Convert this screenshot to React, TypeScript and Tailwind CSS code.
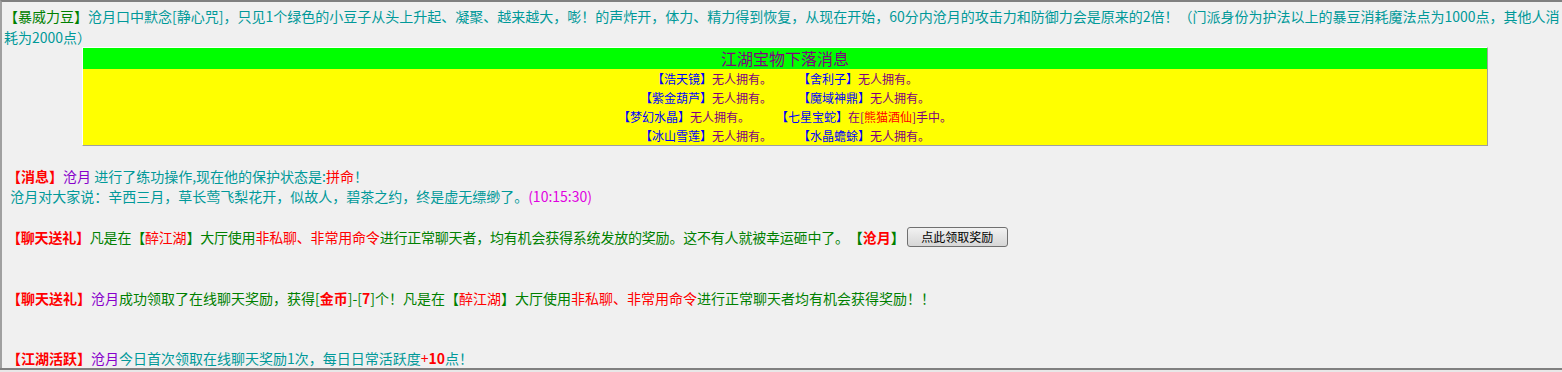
import React from 'react';

const font = "font-['Noto_Sans_CJK_SC',sans-serif]";

const treasures: [string, React.ReactNode, string, React.ReactNode][] = [
  ['浩天镜', '无人拥有。', '舍利子', '无人拥有。'],
  ['紫金葫芦', '无人拥有。', '魔域神鼎', '无人拥有。'],
  [
    '梦幻水晶',
    '无人拥有。',
    '七星宝蛇',
    <>
      在[<span className="text-[#ff0000]">熊猫酒仙</span>]手中。
    </>,
  ],
  ['冰山雪莲', '无人拥有。', '水晶蟾蜍', '无人拥有。'],
];

const Name = () => <span className="text-[#8800cc]">沧月</span>;

const App: React.FC = () => {
  return (
    <div lang="zh-CN" className={`h-[372px] w-[1562px] overflow-hidden bg-[#f0f0f0] ${font} text-[14px] leading-[20px]`}>
      <div className="h-[368px] overflow-hidden border-t-2 border-l-2 border-t-[#808080] border-l-[#a0a0a0] pt-[4px]">
        <div className="pl-[2px] leading-[21px] text-[#009999]">
          <span className="whitespace-nowrap">
            <span className="text-[#008000]">【暴威力豆】</span>沧月口中默念[静心咒]，只见1个绿色的小豆子从头上升起、凝聚、越来越大，嘭！的声炸开，体力、精力得到恢复，从现在开始，60分内沧月的攻击力和防御力会是原来的2倍！（门派身份为护法以上的暴豆消耗魔法点为1000点，其他人消
          </span>
          <br />
          耗为2000点）
        </div>

        <div className="-mt-[1px] ml-[80px] w-[1406px] border border-t-white border-l-white border-r-[#a0a0a0] border-b-[#a0a0a0]">
          <div className="h-[21px] bg-[#00ff00] text-center text-[16px] leading-[21px] text-[#800080]">
            江湖宝物下落消息
          </div>
          <div className="bg-[#ffff00] text-[12px] leading-[19px]">
            {treasures.map(([a, aState, b, bState], i) => (
              <div key={i} className="flex justify-center gap-[26px]">
                <span>
                  <span className="text-[#0000ff]">【{a}】</span>
                  <span className="text-[#800080]">{aState}</span>
                </span>
                <span>
                  <span className="text-[#0000ff]">【{b}】</span>
                  <span className="text-[#800080]">{bState}</span>
                </span>
              </div>
            ))}
          </div>
        </div>

        <div className="mt-[20px] pl-[5px] text-[#009999]">
          <div>
            <span className="font-bold text-[#ff0000]">【消息】</span>
            <Name /> 进行了练功操作,现在他的保护状态是:<span className="text-[#ff0000]">拼命</span>！
          </div>
          <div>
            &nbsp;沧月对大家说：辛西三月，草长莺飞梨花开，似故人，碧茶之约，终是虚无缥缈了。
            <span className="text-[#e000e0]">(10:15:30)</span>
          </div>
        </div>

        <div className="mt-[21px] flex items-center whitespace-nowrap pl-[5px] text-[#008000]">
          <span className="font-bold tracking-[-0.2px] text-[#ff0000]">【聊天送礼】</span>
          <span className="tracking-[-0.2px]">
            凡是在【<span className="text-[#ff0000]">醉江湖</span>】大厅使用
            <span className="text-[#ff0000]">非私聊、非常用命令</span>
            进行正常聊天者，均有机会获得系统发放的奖励。这不有人就被幸运砸中了。
          </span>
          <span className="font-bold">
            【<span className="text-[#ff0000]">沧月</span>】
          </span>
          <button className="ml-[2px] h-[20px] w-[101px] rounded-[3px] border border-[#707070] bg-gradient-to-b from-[#f2f2f2] to-[#d6d6d6] text-[12px] leading-[18px] text-black">
            点此领取奖励
          </button>
        </div>

        <div className="mt-[41px] whitespace-nowrap pl-[5px] text-[#008000]">
          <span className="font-bold text-[#ff0000]">【聊天送礼】</span>
          <Name />
          成功领取了在线聊天奖励，获得[<span className="font-bold text-[#ff0000]">金币</span>]-[
          <span className="font-bold text-[#ff0000]">7</span>]个！凡是在【
          <span className="text-[#ff0000]">醉江湖</span>】大厅使用
          <span className="text-[#ff0000]">非私聊、非常用命令</span>
          进行正常聊天者均有机会获得奖励！！
        </div>

        <div className="mt-[40px] whitespace-nowrap pl-[5px] text-[#009999]">
          <span className="font-bold text-[#ff0000]">【江湖活跃】</span>
          <Name />
          今日首次领取在线聊天奖励1次，每日日常活跃度
          <span className="text-[#ff0000]">
            +<span className="font-bold">10</span>
          </span>
          点！
        </div>
      </div>
      <div className="h-[4px] border-t-2 border-t-[#808080] bg-[#e8e8e8]" />
    </div>
  );
};

export default App;
